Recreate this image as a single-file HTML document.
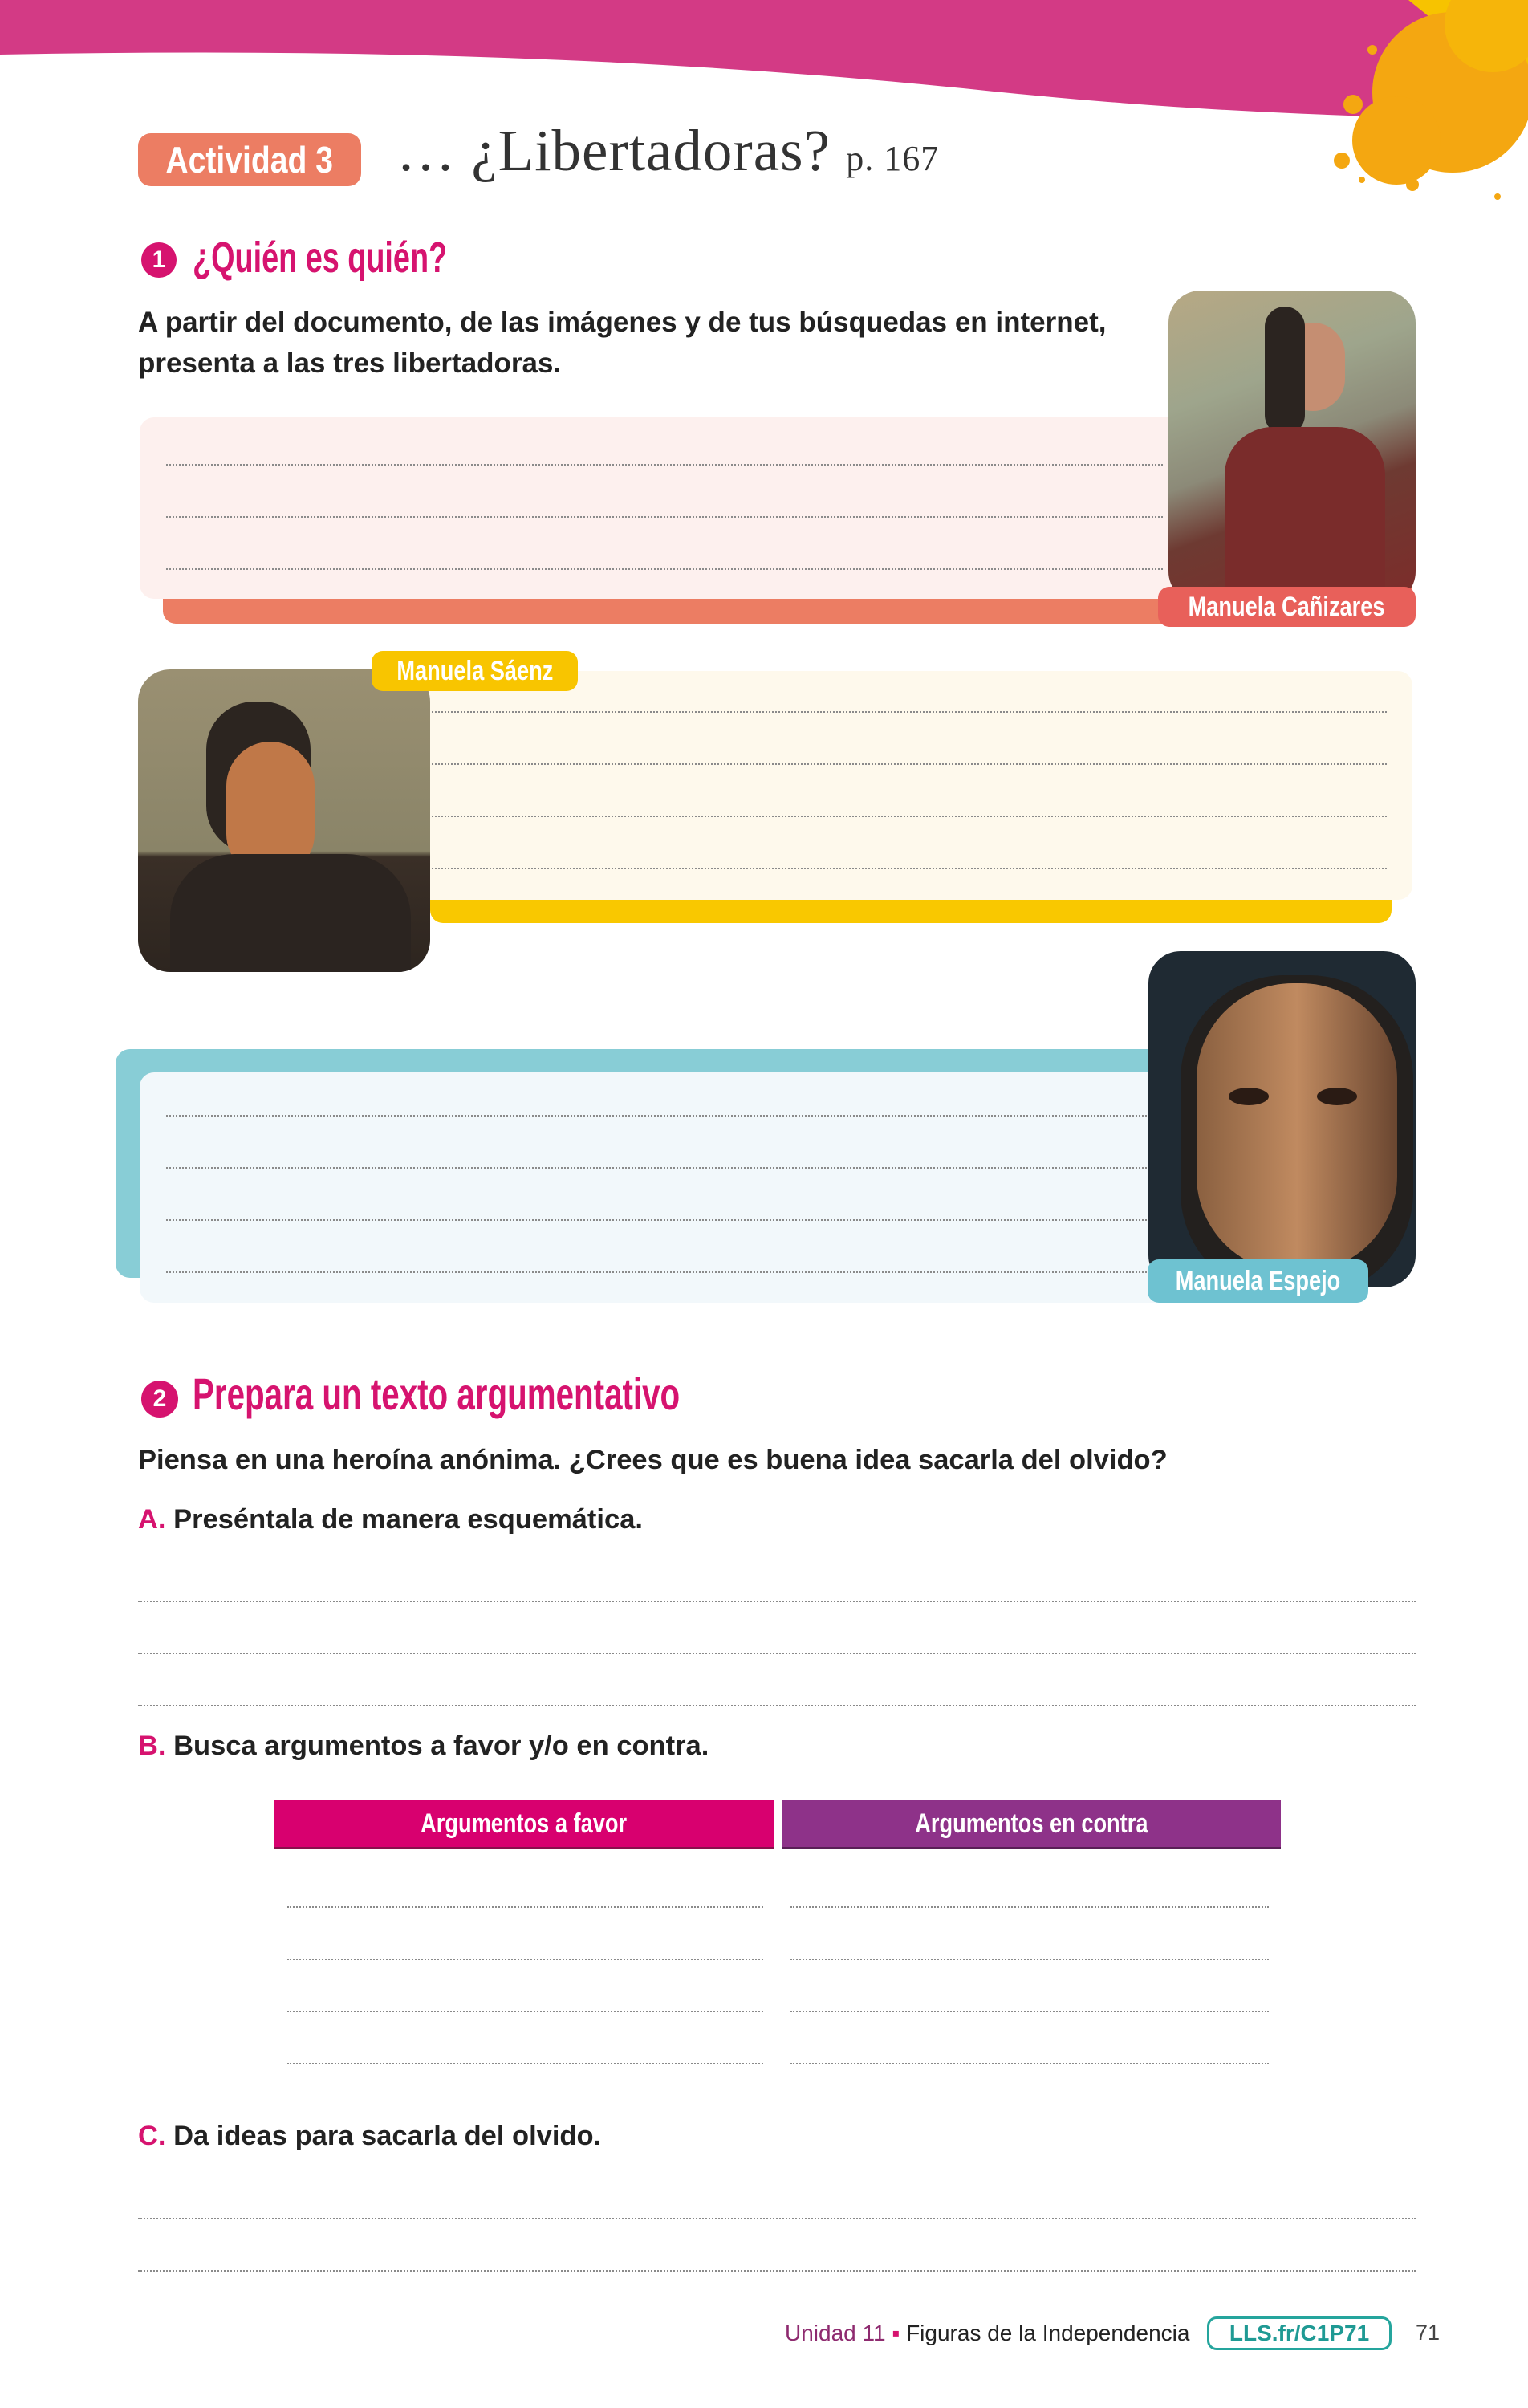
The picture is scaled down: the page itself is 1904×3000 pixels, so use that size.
<!DOCTYPE html>
<html><head><meta charset="utf-8">
<style>
*{margin:0;padding:0;box-sizing:border-box}
body{width:1904px;height:3000px;position:relative;background:#fff;font-family:"Liberation Sans",sans-serif;overflow:hidden}
.a{position:absolute}
.dl{position:absolute;height:0;border-top:2px dotted #8a8a8a}
.n{font-family:"Liberation Sans",sans-serif;font-weight:bold}
.sx{display:inline-block;transform:scaleX(0.76);transform-origin:left center;white-space:nowrap}
.sc{display:inline-block;transform:scaleX(0.8);transform-origin:center center;white-space:nowrap}
.lbl{position:absolute;color:#fff;font-weight:bold;font-size:34px;text-align:center;border-radius:14px;line-height:50px;overflow:hidden}
.t{position:absolute;font-weight:bold;font-size:35px;color:#222;white-space:nowrap}
.t b{color:#d6136f}
</style></head><body>
<svg class="a" style="left:0;top:0" width="1904" height="300">
<path d="M0 0H1904V150C1700 145 1500 142 1200 110C800 70 400 60 0 68Z" fill="#d33a85"/>
<path d="M1755 0H1904V120Z" fill="#f7c300"/>
<circle cx="1810" cy="115" r="100" fill="#f4a711"/>
<circle cx="1740" cy="175" r="55" fill="#f4a711"/>
<circle cx="1860" cy="30" r="60" fill="#f6b50a"/>
<circle cx="1686" cy="130" r="12" fill="#f4a711"/>
<circle cx="1672" cy="200" r="10" fill="#f4a711"/>
<circle cx="1697" cy="224" r="4" fill="#f4a711"/>
<circle cx="1760" cy="230" r="8" fill="#f4a711"/>
<circle cx="1866" cy="245" r="4" fill="#f4a711"/>
<circle cx="1710" cy="62" r="6" fill="#f4a711"/>
</svg>
<div class="a n" style="left:172px;top:166px;width:278px;height:66px;background:#ec7d63;border-radius:16px;color:#fff;font-size:46px;line-height:66px;text-align:center"><span class="sc" style="transform:scaleX(0.85)">Actividad 3</span></div>
<div class="a" style="left:494px;top:146px;font-family:'Liberation Serif',serif;font-size:73px;color:#333;white-space:nowrap;letter-spacing:1px">… ¿Libertadoras? <span style="font-size:44px">p. 167</span></div>

<div class="a" style="left:176px;top:302px;width:44px;height:44px;border-radius:50%;background:#d6136f;color:#fff;font-weight:bold;font-size:30px;text-align:center;line-height:44px">1</div>
<div class="a n" style="left:240px;top:290px;font-size:54px;color:#d6136f;white-space:nowrap"><span class="sx" style="transform:scaleX(0.7)">¿Quién es quién?</span></div>
<div class="t" style="left:172px;top:382px">A partir del documento, de las imágenes y de tus búsquedas en internet,</div>
<div class="t" style="left:172px;top:433px">presenta a las tres libertadoras.</div>

<!-- box 1 -->
<div class="a" style="left:203px;top:720px;width:1557px;height:57px;background:#ec7d63;border-radius:0 0 16px 16px"></div>
<div class="a" style="left:174px;top:520px;width:1311px;height:226px;background:#fdf0ee;border-radius:18px"></div>
<div class="dl" style="left:207px;top:578px;width:1242px"></div>
<div class="dl" style="left:207px;top:643px;width:1242px"></div>
<div class="dl" style="left:207px;top:708px;width:1242px"></div>
<div class="a" style="left:1456px;top:362px;width:308px;height:390px;border-radius:40px;overflow:hidden;background:linear-gradient(160deg,#b7a884 0%,#9ea58c 30%,#8c8a78 50%,#6e3a32 65%,#7d2c2a 100%)">
<div class="a" style="left:140px;top:40px;width:80px;height:110px;border-radius:40px;background:#c58e72"></div>
<div class="a" style="left:120px;top:20px;width:50px;height:160px;border-radius:25px;background:#2b2420"></div>
<div class="a" style="left:70px;top:170px;width:200px;height:230px;border-radius:60px 60px 0 0;background:#7a2c2b"></div>
</div>
<div class="lbl" style="left:1443px;top:731px;width:321px;background:#e8605a"><span class="sc">Manuela Cañizares</span></div>

<!-- box 2 -->
<div class="a" style="left:536px;top:1100px;width:1198px;height:50px;background:#f9c800;border-radius:0 0 16px 16px"></div>
<div class="a" style="left:463px;top:836px;width:1297px;height:285px;background:#fef9ec;border-radius:18px"></div>
<div class="dl" style="left:501px;top:886px;width:1227px"></div>
<div class="dl" style="left:501px;top:951px;width:1227px"></div>
<div class="dl" style="left:501px;top:1016px;width:1227px"></div>
<div class="dl" style="left:501px;top:1081px;width:1227px"></div>
<div class="a" style="left:172px;top:834px;width:364px;height:377px;border-radius:40px;overflow:hidden;background:linear-gradient(180deg,#9a9072,#8a8468 60%,#3a2f27 62%,#2d251f)">
<div class="a" style="left:85px;top:40px;width:130px;height:190px;border-radius:60px;background:#2c2520"></div>
<div class="a" style="left:110px;top:90px;width:110px;height:170px;border-radius:55px;background:#c07848"></div>
<div class="a" style="left:40px;top:230px;width:300px;height:160px;border-radius:80px 80px 0 0;background:#2b2420"></div>
</div>
<div class="lbl" style="left:463px;top:811px;width:257px;background:#f8c500"><span class="sc">Manuela Sáenz</span></div>

<!-- box 3 -->
<div class="a" style="left:144px;top:1307px;width:1310px;height:285px;background:#88cdd6;border-radius:18px"></div>
<div class="a" style="left:174px;top:1336px;width:1309px;height:287px;background:#f2f8fb;border-radius:18px"></div>
<div class="dl" style="left:207px;top:1389px;width:1238px"></div>
<div class="dl" style="left:207px;top:1454px;width:1238px"></div>
<div class="dl" style="left:207px;top:1519px;width:1238px"></div>
<div class="dl" style="left:207px;top:1584px;width:1238px"></div>
<div class="a" style="left:1431px;top:1185px;width:333px;height:419px;border-radius:40px;overflow:hidden;background:#1f2a33">
<div class="a" style="left:40px;top:30px;width:290px;height:400px;border-radius:130px;background:#23201e"></div>
<div class="a" style="left:60px;top:40px;width:250px;height:360px;border-radius:120px;background:linear-gradient(90deg,#8a6040,#c08a60 50%,#6a4630)"></div>
<div class="a" style="left:100px;top:170px;width:50px;height:22px;border-radius:50%;background:#2a1b14"></div>
<div class="a" style="left:210px;top:170px;width:50px;height:22px;border-radius:50%;background:#2a1b14"></div>
</div>
<div class="lbl" style="left:1430px;top:1569px;width:275px;height:54px;line-height:54px;background:#6ec2d1"><span class="sc">Manuela Espejo</span></div>

<!-- section 2 -->
<div class="a" style="left:176px;top:1720px;width:46px;height:46px;border-radius:50%;background:#d6136f;color:#fff;font-weight:bold;font-size:30px;text-align:center;line-height:46px">2</div>
<div class="a n" style="left:240px;top:1704px;font-size:56px;color:#d6136f;white-space:nowrap"><span class="sx" style="transform:scaleX(0.72)">Prepara un texto argumentativo</span></div>
<div class="t" style="left:172px;top:1800px;font-size:34.5px">Piensa en una heroína anónima. ¿Crees que es buena idea sacarla del olvido?</div>
<div class="t" style="left:172px;top:1874px;font-size:34.5px"><b>A.</b> Preséntala de manera esquemática.</div>
<div class="dl" style="left:172px;top:1994px;width:1592px"></div>
<div class="dl" style="left:172px;top:2059px;width:1592px"></div>
<div class="dl" style="left:172px;top:2124px;width:1592px"></div>
<div class="t" style="left:172px;top:2156px;font-size:34.5px"><b>B.</b> Busca argumentos a favor y/o en contra.</div>
<div class="a n" style="left:341px;top:2243px;width:623px;height:61px;background:#d8006f;color:#fff;font-size:34px;line-height:58px;text-align:center;border-bottom:3px solid #8a0f4c"><span class="sc">Argumentos a favor</span></div>
<div class="a n" style="left:974px;top:2243px;width:622px;height:61px;background:#8e3289;color:#fff;font-size:34px;line-height:58px;text-align:center;border-bottom:3px solid #5a1f56"><span class="sc">Argumentos en contra</span></div>
<div class="dl" style="left:358px;top:2375px;width:593px"></div>
<div class="dl" style="left:358px;top:2440px;width:593px"></div>
<div class="dl" style="left:358px;top:2505px;width:593px"></div>
<div class="dl" style="left:358px;top:2570px;width:593px"></div>
<div class="dl" style="left:985px;top:2375px;width:596px"></div>
<div class="dl" style="left:985px;top:2440px;width:596px"></div>
<div class="dl" style="left:985px;top:2505px;width:596px"></div>
<div class="dl" style="left:985px;top:2570px;width:596px"></div>
<div class="t" style="left:172px;top:2642px;font-size:34.5px"><b>C.</b> Da ideas para sacarla del olvido.</div>
<div class="dl" style="left:172px;top:2763px;width:1592px"></div>
<div class="dl" style="left:172px;top:2828px;width:1592px"></div>

<!-- footer -->
<div class="a" style="left:978px;top:2891px;font-size:28px;white-space:nowrap;color:#222"><span style="color:#8e2a6f">Unidad 11</span> <span style="color:#d6136f">▪</span> Figuras de la Independencia</div>
<div class="a n" style="left:1504px;top:2886px;width:230px;height:42px;border:3px solid #25a59d;border-radius:12px;color:#1f9a94;font-size:28px;line-height:36px;text-align:center">LLS.fr/C1P71</div>
<div class="a" style="left:1764px;top:2891px;font-size:27px;color:#444">71</div>
</body></html>
